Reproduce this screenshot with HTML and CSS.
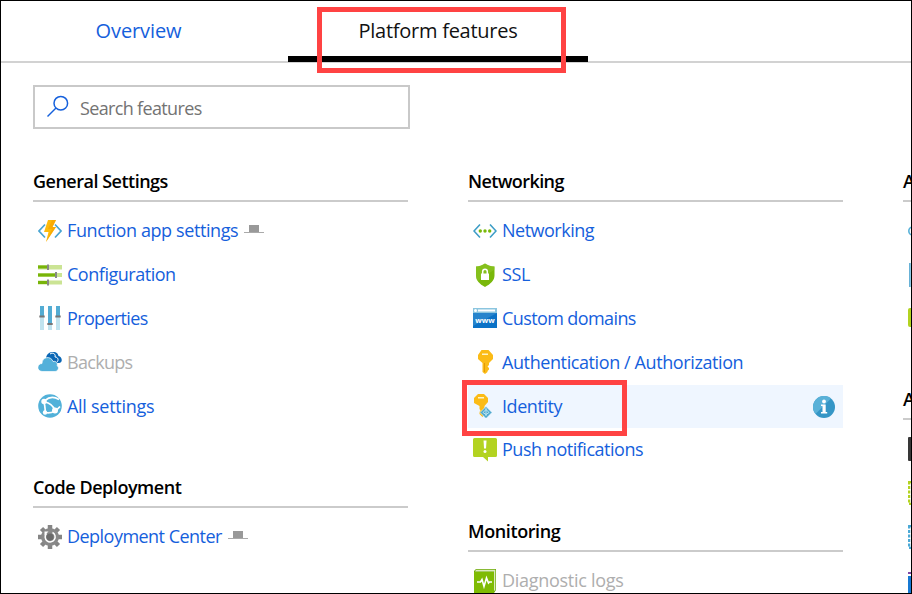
FILE: index.html
```
<!DOCTYPE html>
<html lang="en">
<head>
<meta charset="utf-8">
<title>Platform features</title>
<link rel="stylesheet" href="styles.css">
</head>
<body>
<div class="window">
  <nav class="tabs">
    <a class="tab overview"><span>Overview</span></a>
    <a class="tab active"><span>Platform features</span><i class="callout tab-callout"></i></a>
  </nav>
  <div class="search">
    <svg width="24" height="24" viewBox="0 0 24 24" fill="none" stroke="#1560dc" stroke-width="1.5"><circle cx="13.8" cy="8.2" r="6.8"/><path d="M9 13 .5 21.500"/></svg>
    <span>Search features</span>
  </div>
  <main class="columns">
    <div class="column">
      <section>
        <h2 class="h-general">General Settings</h2>
        <ul>
          <li><svg class="icon" viewBox="0 0 24 24"><path d="M7 5.500 1 12l6 6.500M17 5.500l6 6.500-6 6.500" fill="none" stroke="#4aa5d2" stroke-width="1.700"/><path d="M10 1h8l-3.500 7H18L8 23l2.500-10H6z" fill="#fdbb0b"/><path d="M14 1h4l-3.500 7H18L8 23l6-13h-4z" fill="#f6a000" opacity=".6"/></svg><a class="t-function">Function app settings</a><svg class="pin" viewBox="0 0 20 10"><path d="M5 1h10v7H5z" fill="#999"/><path d="M0 8.500h20" stroke="#aaa"/></svg></li>
          <li><svg class="icon" viewBox="0 0 24 24"><path d="M0 2h24v4.500H0zM0 10h24v4H0zM0 17.500h24v4H0z" fill="#cbe494"/><path d="M0 2.500h9v3H0zM0 10.500h17v3H0zM0 18h9v3H0z" fill="#78b409"/><path d="M9 1.500h2v5.500H9zM17 9h2v6h-2zM9 16.500h2v6H9z" fill="#888"/></svg><a class="t-config">Configuration</a></li>
          <li><svg class="icon" viewBox="0 0 24 24"><path d="M2 0h4v24H2zM10 0h4v24h-4zM18 0h4v24h-4z" fill="#c0e3ef"/><path d="M2 0h4v10H2zM10 0h4v17h-4zM18 0h4v10h-4z" fill="#53acd3"/><path d="M1.300 9.500h5.400v2H1.300zM9.300 17h5.400v2H9.300zM17.300 9.500h5.400v2h-5.400z" fill="#777"/></svg><a class="t-properties">Properties</a></li>
          <li class="disabled"><svg class="icon" viewBox="0 0 24 24"><path d="M9 13C6 7 10 1.500 15 2c4 0 5 2 5.500 4 4 .5 4.500 7 .5 7z" fill="#0b67b5"/><path d="M12 4c3-2 6 0 5 3 3 0 4 3 2 5" fill="none" stroke="#fff"/><path d="M4 21.500c-6-.5-5-8 0-8 0-7 9-8 11-2 4-1 5 3 4 4 3 2 1 6-2 6z" fill="#53b0da" stroke="#fff" stroke-width=".7"/></svg><a class="t-backups">Backups</a></li>
          <li><svg class="icon" viewBox="0 0 24 24"><circle cx="12" cy="12" r="11.800" fill="#52b1d9"/><path d="M5.500 7c1.500 4 2 7 1.500 11M7 6.500c4-3.500 9-4 14-1M7 8c5 1 8 4 10 8M7 18.500c5 1 11-1 15-6" fill="none" stroke="#fff" stroke-width="1.700"/><circle cx="6" cy="7.500" r="2.700" fill="#fff"/><circle cx="17" cy="16.500" r="3" fill="#fff"/><circle cx="7" cy="18.500" r="2.200" fill="#fff"/></svg><a class="t-all">All settings</a></li>
        </ul>
      </section>
      <section>
        <h2 class="h-code">Code Deployment</h2>
        <ul>
          <li><svg class="icon" viewBox="0 0 24 24"><g stroke="#858585" stroke-width="4.500"><path d="M12 0v24M0 12h24M3.500 3.500l17 17M20.500 3.500l-17 17"/></g><circle cx="12" cy="12" r="9" fill="#898989"/><circle cx="12" cy="12" r="3.500" fill="#6b6b6b"/><path d="M8.500 8.500a5 5 0 1 0 6-1" fill="none" stroke="#fff" stroke-width="1.500"/><path d="M10.500 6.500h-4v4z" fill="#fff"/></svg><a class="t-center">Deployment Center</a><svg class="pin" viewBox="0 0 20 10"><path d="M5 1h10v7H5z" fill="#999"/><path d="M0 8.500h20" stroke="#aaa"/></svg></li>
        </ul>
      </section>
    </div>
    <div class="column">
      <section>
        <h2 class="h-network">Networking</h2>
        <ul>
          <li><svg class="icon" viewBox="0 0 24 24"><path d="M7 5.500 1 12l6 6.500M17 5.500l6 6.500-6 6.500" fill="none" stroke="#3d9dc6" stroke-width="1.600"/><g fill="#79b909"><circle cx="7.300" cy="12" r="1.700"/><circle cx="12" cy="12" r="1.700"/><circle cx="16.700" cy="12" r="1.700"/></g></svg><a class="t-network">Networking</a></li>
          <li><svg class="icon" viewBox="0 0 24 24"><path d="M12 .5c3 2 6 3 9.500 3v9c0 5-4 8.500-9.500 11.500C6.500 21 3 17.500 3 12.500v-9c3 0 6-1 9-3z" fill="#79b80b"/><path d="M12 .5c3 2 6 3 9.500 3v3L5 18c-2-2-2-4-2-6v-8.500c3 0 6-1 9-3z" fill="#92c72e" opacity=".5"/><path d="M8 10.500h8v6.500H8z" fill="#fff"/><path d="M9.700 11V8.500a2.300 2.300 0 0 1 4.600 0V11" fill="none" stroke="#fff" stroke-width="1.500"/></svg><a class="t-ssl">SSL</a></li>
          <li><svg class="icon" viewBox="0 0 24 24"><path d="M0 2h24v20H0z" fill="#0b72c6"/><path d="M0 2h24v5H0z" fill="#8bc5df"/><path d="M5 3.500h17v2H5z" fill="#fff"/><circle cx="2.500" cy="4.500" r="1.500" fill="#fff"/><path d="M0 7h24L0 20z" fill="#3b91d1" opacity=".6"/><text x="12" y="17" text-anchor="middle" class="www">www</text></svg><a class="t-domains">Custom domains</a></li>
          <li><svg class="icon" viewBox="0 0 24 24"><path d="M8.500 0h7L20 5v4l-4 4v2l-1.500 1.500L16 18v1.500l-1.500 1.500v1L12 24l-2.500-2V13L5 9V5z" fill="#fbbb16"/><path d="M9 3.500h6v1.500H9z" fill="#fff3c4"/><path d="M11 13h1v9h-1z" fill="#e49a08"/></svg><a class="t-auth">Authentication / Authorization</a></li>
          <li class="selected"><svg class="icon" viewBox="0 0 24 24"><path d="M5 0h6l4 4v4l-3.500 4v8l-2 3-3-3v-2l1-1.500-1-1.500v-3L1 9V4z" fill="#fbbb16"/><path d="M5 3h6v1.500H5z" fill="#fff3c4"/><path d="m13 12.500 6 6-6 6-6-6z" fill="#4fa9ce" stroke="#eff6ff" stroke-width=".6"/><path d="M13 14v8M10 18.500l3 2 3-2-3-3z" fill="none" stroke="#d7f1f7" stroke-width=".8"/></svg><a class="t-identity">Identity</a><svg class="info" viewBox="0 0 22 22"><circle cx="11" cy="11" r="11" fill="#3596c6"/><path d="M2.500 18A11 11 0 0 1 18 2.500z" fill="#59b1d8"/><circle cx="11" cy="5.500" r="1.900" fill="#fff"/><path d="M8 8.500h4.700v7.500h1.500v1.500H8V16h1.500v-6H8z" fill="#fff"/></svg><i class="callout item-callout"></i></li>
          <li><svg class="icon" viewBox="0 0 24 24"><path d="M1.500 0h21Q24 0 24 1.500v16q0 1.500-1.500 1.500H15v4.500L10 19H1.500Q0 19 0 17.500v-16Q0 0 1.500 0z" fill="#b3d321"/><path d="M10.500 2.500h3l-.5 8h-2z" fill="#fff"/><circle cx="12" cy="13.500" r="1.500" fill="#fff"/></svg><a class="t-push">Push notifications</a></li>
        </ul>
      </section>
      <section>
        <h2 class="h-monitor">Monitoring</h2>
        <ul>
          <li class="disabled"><svg class="icon" viewBox="0 0 24 24"><path d="M1 2 3 0h20v21l-2 3H1z" fill="#6eaa08"/><path d="M3 .8h19.300V21L21 22V2.500H2z" fill="#dceabf"/><path d="M1 3h20v21H1z" fill="#7fbb04"/><path d="M4 13h3.500l1.500-2.500 2 7L13.500 9l2 5 1-1H19" fill="none" stroke="#fff" stroke-width="1.600"/></svg><a class="t-logs">Diagnostic logs</a></li>
        </ul>
      </section>
    </div>
    <div class="column">
      <section>
        <h2>A</h2>
        <ul>
          <li><svg class="icon" viewBox="0 0 24 24"><circle cx="5" cy="12" r="4.200" fill="none" stroke="#58b2d9" stroke-width="1.600"/></svg></li>
          <li><svg class="icon" viewBox="0 0 24 24"><path d="M1 0h22v24H1z" fill="#91cbe7"/><path d="M1 0h1v24H1z" fill="#68b2d7"/></svg></li>
          <li><svg class="icon" viewBox="0 0 24 24"><rect y="2" width="24" height="19" rx="2" fill="#b3d321"/></svg></li>
        </ul>
      </section>
      <section>
        <h2>A</h2>
        <ul>
          <li><svg class="icon" viewBox="0 0 24 24"><rect width="24" height="24" rx="1" fill="#383838"/></svg></li>
          <li><svg class="icon" viewBox="0 0 24 24"><rect x="1" y="1" width="22" height="22" fill="none" stroke="#b3d321" stroke-width="2.500" stroke-dasharray="3 1.500"/></svg></li>
          <li><svg class="icon" viewBox="0 0 24 24"><rect x="1" y="1" width="22" height="22" fill="none" stroke="#4ba9d6" stroke-width="2.500" stroke-dasharray="3 1.500"/></svg></li>
          <li><svg class="icon" viewBox="0 0 24 24"><path d="M0 7h24v17H0z" fill="#1679d3"/><path d="M0 3h24v2H0z" fill="#8048a5"/></svg></li>
        </ul>
      </section>
    </div>
  </main>
</div>
</body>
</html>
```
FILE: styles.css
```
* { box-sizing: border-box; }
body { margin: 0; background: #fff; overflow: hidden; }
.window { width: 912px; height: 594px; overflow: hidden; border: 1px solid #000; font: 18px/24px "Open Sans", "Noto Sans", sans-serif; color: #000; }
.tabs { display: flex; height: 62px; border-bottom: 2px solid #d2d2d2; }
.tab { display: flex; justify-content: center; height: 61px; padding-top: 18px; font-size: 20px; color: #1560dc; letter-spacing: -.1px; }
.overview { width: 287px; padding-right: 12px; }
.active { position: relative; width: 300px; color: #111; border-bottom: 6px solid #000; letter-spacing: -.25px; }
.callout { position: absolute; border: 5px solid #ff4343; }
.tab-callout { left: 29px; top: 6px; width: 249px; height: 66px; }
.search { display: flex; align-items: center; width: 377px; height: 44px; margin: 22px 0 0 32px; padding-left: 12px; border: 2px solid #c9c9c9; color: #737373; }
.search svg { margin-right: 9px; }
.search span { padding-top: 1px; letter-spacing: -.65px; }
.columns { display: flex; gap: 60px; width: 1250px; margin: 33px 0 0 32px; }
.column { width: 375px; }
section { margin-bottom: 39.5px; }
h2 { height: 40px; margin: 0 0 7.5px; padding-top: 7px; border-bottom: 2px solid #cbcbcb; font-size: 18px; line-height: 24px; font-weight: 600; white-space: nowrap; }
ul { margin: 0; padding: 0; list-style: none; }
li { position: relative; display: flex; align-items: center; height: 43.8px; padding: 0 8px 0 5px; color: #1560dc; white-space: nowrap; }
li a { margin-top: -2px; }
.icon { flex: none; width: 24px; height: 24px; margin: -1px 5px 0 0; }
.pin { width: 20px; height: 10px; margin: -4px 0 0 6px; }
.disabled { color: #aeaeae; }
.selected { background: #eff6ff; }
.info { width: 22px; height: 22px; margin-left: auto; }
.item-callout { left: -6px; top: -5px; width: 165px; height: 56px; }
.www { font: bold 7.5px "Open Sans", sans-serif; fill: #fff; }

/* Per-label tracking */
.h-general { letter-spacing: -.5px; }
.h-code { letter-spacing: -.45px; }
.h-network { letter-spacing: -.6px; }
.h-monitor { letter-spacing: -.4px; }
.t-function, .t-auth, .t-ssl { letter-spacing: -.4px; }
.t-identity { letter-spacing: -.45px; }
.t-config, .t-push { letter-spacing: -.47px; }
.t-properties { letter-spacing: -.65px; }
.t-backups { letter-spacing: -.7px; }
.t-all, .t-logs { letter-spacing: -.28px; }
.t-center { letter-spacing: -.53px; }
.t-network { letter-spacing: -.5px; }
.t-domains { letter-spacing: -.6px; }
```
